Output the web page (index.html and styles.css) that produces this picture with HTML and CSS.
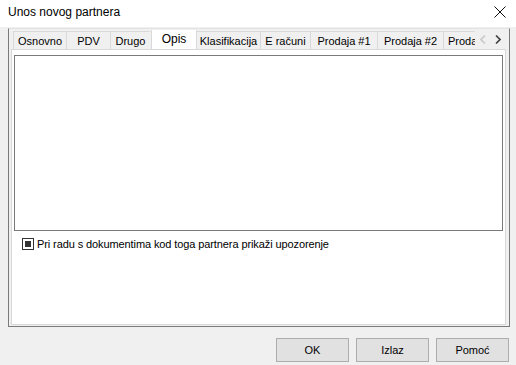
FILE: index.html
```html
<!DOCTYPE html>
<html lang="hr">
<head>
  <meta charset="UTF-8">
  <title>Unos novog partnera</title>
  <link rel="stylesheet" href="styles.css">
</head>
<body>

  <div class="titlebar">
    <span class="title">Unos novog partnera</span>
    <span class="close">
      <svg width="12" height="12" viewBox="0 0 12 12">
        <path d="M0.5 0.5 L11.5 11.5 M11.5 0.5 L0.5 11.5" stroke="#111" stroke-width="1" fill="none"/>
      </svg>
    </span>
  </div>

  <div class="frame">
    <div class="tabs">
      <div class="tab-row">
        <div class="tab t-osnovno">Osnovno</div>
        <div class="tab t-pdv">PDV</div>
        <div class="tab t-drugo">Drugo</div>
        <div class="tab t-opis active">Opis</div>
        <div class="tab t-klas">Klasifikacija</div>
        <div class="tab t-erac">E računi</div>
        <div class="tab t-prod">Prodaja #1</div>
        <div class="tab t-prod2">Prodaja #2</div>
        <div class="tab t-clip">Prodaja #3</div>
        <div class="scroller">
          <svg width="6" height="9" viewBox="0 0 6 9">
            <path d="M5 0.5 L1 4.5 L5 8.5" stroke="#c8c8c8" stroke-width="1.6" fill="none"/>
          </svg>
          <svg width="6" height="9" viewBox="0 0 6 9">
            <path d="M1 0.5 L5 4.5 L1 8.5" stroke="#404040" stroke-width="1.6" fill="none"/>
          </svg>
        </div>
      </div>

      <div class="page">
        <textarea class="memo"></textarea>
        <label class="check">
          <span class="box"><span class="mark"></span></span>
          Pri radu s dokumentima kod toga partnera prikaži upozorenje
        </label>
      </div>
    </div>
  </div>

  <div class="buttons">
    <button class="btn">OK</button>
    <button class="btn">Izlaz</button>
    <button class="btn">Pomoć</button>
  </div>

</body>
</html>
```

FILE: styles.css
```css
body {
  margin: 0;
  width: 516px;
  height: 365px;
  background-color: #f0f0f0;
  font-family: "Liberation Sans", Arial, sans-serif;
  font-size: 11px;
  color: #000;
  overflow: hidden;
}

.titlebar {
  height: 27px;
  background-color: #fff;
  display: flex;
  align-items: center;
  justify-content: space-between;
  padding: 0 10px 0 8px;
}

.title {
  font-size: 12px;
  margin-top: -3px;
}

.close {
  display: flex;
  margin-top: -3px;
}

.frame {
  margin: 1px 6px 0 8px;
  height: 295px;
  border: 1px solid #7a7a7a;
  border-top-color: #e3e3e3;
  padding: 1px 3px 1px 2px;
}

.tabs {
  height: 100%;
  display: flex;
  flex-direction: column;
}

.tab-row {
  height: 19px;
  display: flex;
  align-items: flex-end;
  padding-left: 2px;
  position: relative;
  overflow: hidden;
}

.tab {
  height: 17px;
  line-height: 18px;
  text-align: center;
  border: 1px solid #d9d9d9;
  border-bottom: none;
  border-right: none;
  background-color: #f0f0f0;
  white-space: nowrap;
  flex-shrink: 0;
}

.tab.active {
  height: 20px;
  line-height: 19px;
  background-color: #fff;
  border-right: 1px solid #d9d9d9;
  margin-bottom: -1px;
  position: relative;
  z-index: 1;
  font-size: 12px;
}

.t-osnovno { width: 52px; }
.t-pdv { width: 43px; }
.t-drugo { width: 39px; }
.t-opis { width: 44px; margin-left: 1px; }
.t-klas { width: 63px; border-left: none; }
.t-erac { width: 49px; }
.t-prod { width: 66px; }
.t-prod2 { width: 65px; }
.t-clip { width: 60px; text-align: left; padding-left: 4px; }

.scroller {
  position: absolute;
  right: 0;
  top: 0;
  width: 31px;
  height: 19px;
  background-color: #f0f0f0;
  display: flex;
  align-items: center;
  justify-content: space-around;
}

.page {
  flex: 1;
  background-color: #fff;
  border: 1px solid #d9d9d9;
  padding: 5px 2px 0 2px;
  display: flex;
  flex-direction: column;
}

.memo {
  height: 176px;
  border: 1px solid #7a7a7a;
  resize: none;
  margin: 0;
  padding: 0;
  background-color: #fff;
  box-sizing: border-box;
}

.check {
  display: flex;
  align-items: center;
  gap: 3px;
  margin: 6px 0 0 8px;
  height: 13px;
  letter-spacing: -0.1px;
}

.box {
  width: 10px;
  height: 10px;
  border: 1px solid #333;
  display: flex;
  align-items: center;
  justify-content: center;
  background-color: #fff;
}

.mark {
  width: 6px;
  height: 6px;
  background-color: #333;
}

.buttons {
  display: flex;
  justify-content: flex-end;
  gap: 7px;
  padding: 11px 7px 0 0;
}

.btn {
  width: 73px;
  height: 24px;
  background-color: #e1e1e1;
  border: 1px solid #adadad;
  font-family: "Liberation Sans", Arial, sans-serif;
  font-size: 11px;
  color: #000;
  padding: 0;
}
```
